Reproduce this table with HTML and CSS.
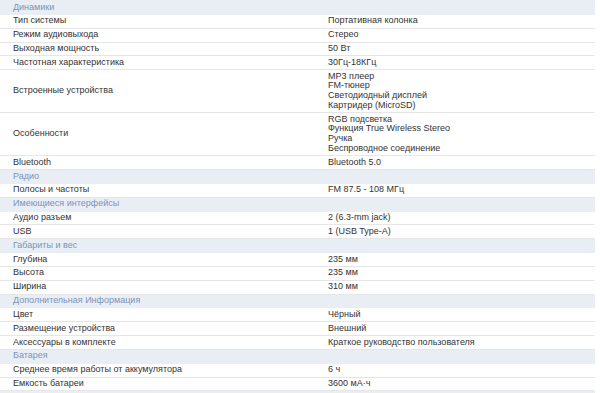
FILE: index.html
```html
<!DOCTYPE html>
<html lang="ru">
<head>
    <meta charset="UTF-8">
    <meta name="viewport" content="width=device-width, initial-scale=1.0">
    <title>Характеристики</title>
    <link rel="stylesheet" href="styles.css">
</head>
<body>

    <table class="specs">
        <tr class="group first"><td colspan="2">Динамики</td></tr>
        <tr><td>Тип системы</td><td>Портативная колонка</td></tr>
        <tr><td>Режим аудиовыхода</td><td>Стерео</td></tr>
        <tr><td>Выходная мощность</td><td>50 Вт</td></tr>
        <tr><td>Частотная характеристика</td><td>30Гц-18КГц</td></tr>
        <tr><td>Встроенные устройства</td><td>MP3 плеер<br>FM-тюнер<br>Светодиодный дисплей<br>Картридер (MicroSD)</td></tr>
        <tr><td>Особенности</td><td>RGB подсветка<br>Функция True Wireless Stereo<br>Ручка<br>Беспроводное соединение</td></tr>
        <tr><td>Bluetooth</td><td>Bluetooth 5.0</td></tr>

        <tr class="group"><td colspan="2">Радио</td></tr>
        <tr><td>Полосы и частоты</td><td>FM 87.5 - 108 МГц</td></tr>

        <tr class="group"><td colspan="2">Имеющиеся интерфейсы</td></tr>
        <tr><td>Аудио разъем</td><td>2 (6.3-mm jack)</td></tr>
        <tr><td>USB</td><td>1 (USB Type-A)</td></tr>

        <tr class="group"><td colspan="2">Габариты и вес</td></tr>
        <tr><td>Глубина</td><td>235 мм</td></tr>
        <tr><td>Высота</td><td>235 мм</td></tr>
        <tr><td>Ширина</td><td>310 мм</td></tr>

        <tr class="group"><td colspan="2">Дополнительная Информация</td></tr>
        <tr><td>Цвет</td><td>Чёрный</td></tr>
        <tr><td>Размещение устройства</td><td>Внешний</td></tr>
        <tr><td>Аксессуары в комплекте</td><td>Краткое руководство пользователя</td></tr>

        <tr class="group"><td colspan="2">Батарея</td></tr>
        <tr><td>Среднее время работы от аккумулятора</td><td>6 ч</td></tr>
        <tr><td>Емкость батареи</td><td>3600 мА·ч</td></tr>

        <tr class="group"><td colspan="2">&nbsp;</td></tr>
    </table>

</body>
</html>
```

FILE: styles.css
```css
* {
    margin: 0;
    padding: 0;
    box-sizing: border-box;
}

body {
    background-color: white;
    font-family: 'Liberation Sans', Arial, sans-serif;
    overflow: hidden;
}

.specs {
    width: 595px;
    border-collapse: collapse;
    font-size: 9px;
    color: #333;
}

.specs td {
    padding: 1.55px 13px 1.6px;
    line-height: 9.7px;
    vertical-align: middle;
    border-bottom: 1px solid #e6e6e6;
}

.specs td:first-child {
    width: 315px;
}

.specs .group td {
    background-color: #e9eef5;
    color: #7a94ba;
    border-bottom-color: #e9eef5;
}

.specs .first td {
    padding-top: 2.55px;
}
```
